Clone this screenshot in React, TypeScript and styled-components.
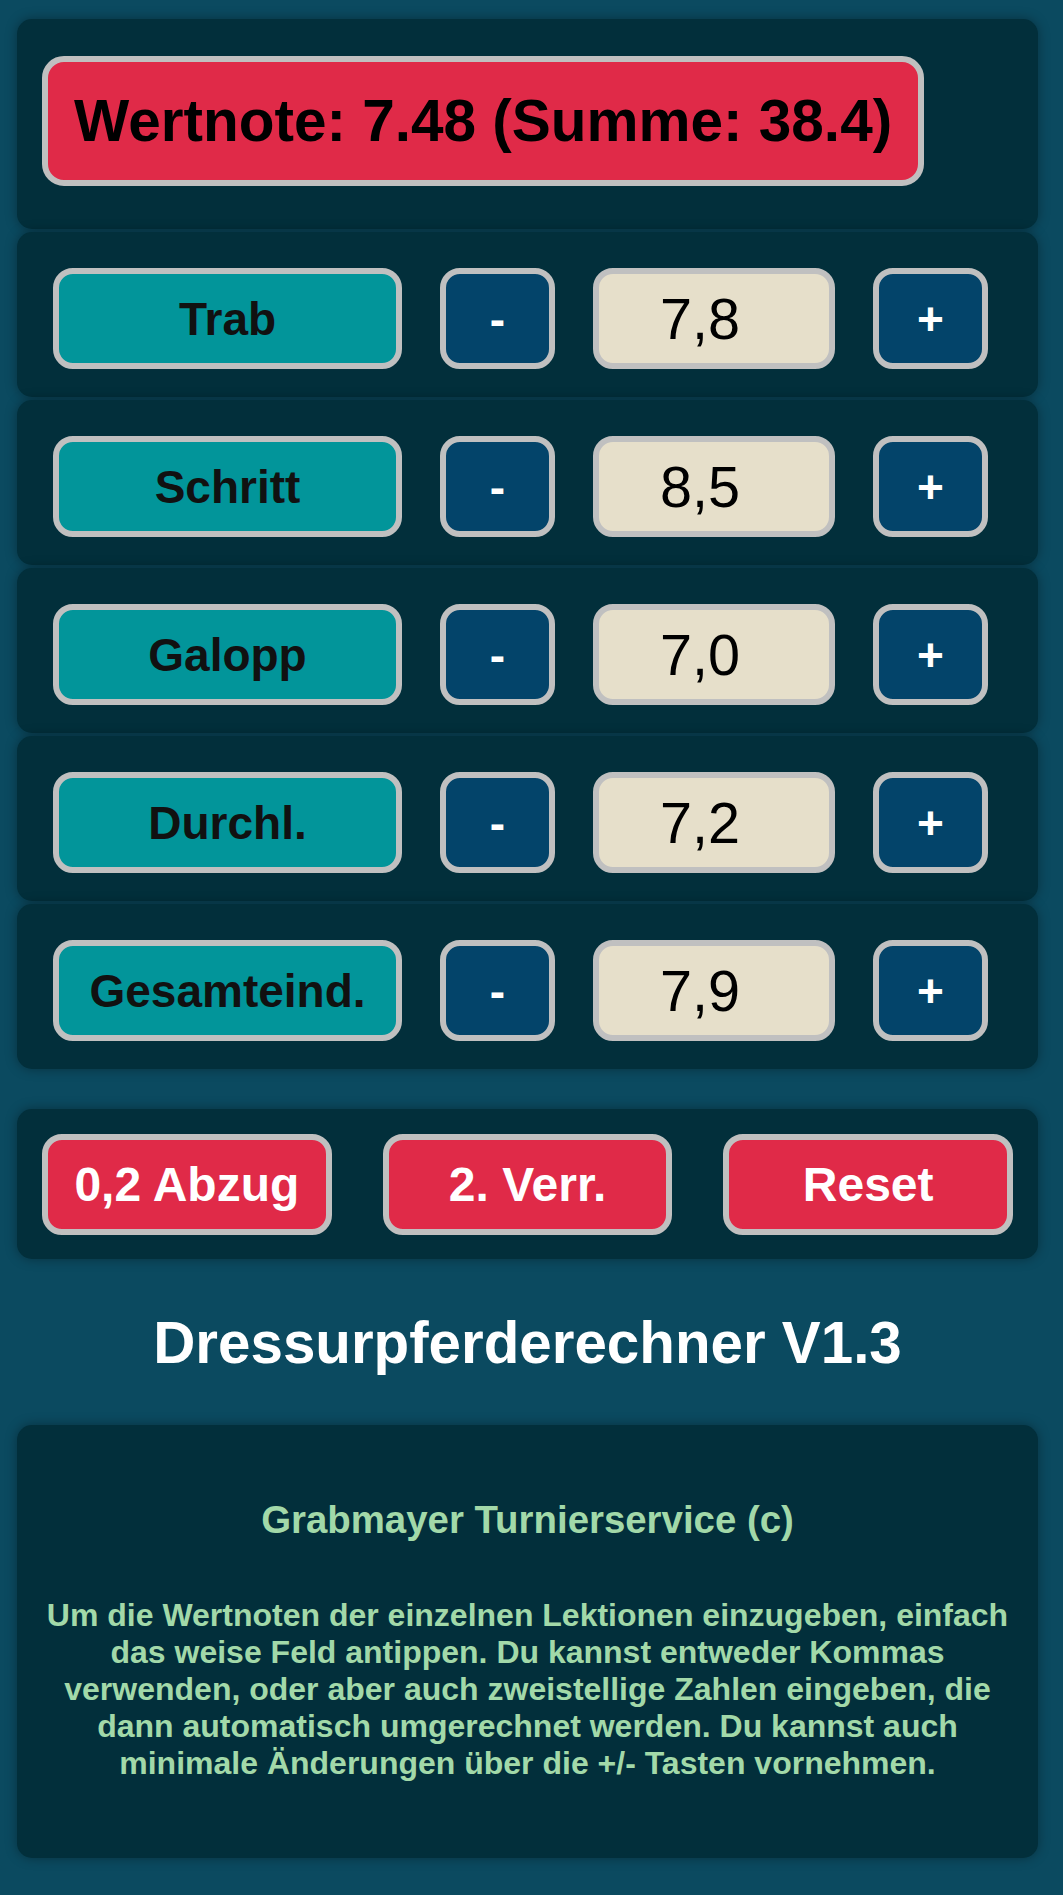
import React from "react";
import styled, { createGlobalStyle } from "styled-components";

const GlobalStyle = createGlobalStyle`
  html, body {
    margin: 0;
    padding: 0;
    background: #0b4a60;
    font-family: "Liberation Sans", Arial, sans-serif;
  }
  * {
    box-sizing: border-box;
  }
`;

const Page = styled.main`
  min-height: 1895px;
  padding: 19px 25px 37px 17px;
  background: #0b4a60;
`;

const Panel = styled.section`
  background: #022f3b;
  border-radius: 15px;
  box-shadow: 0 0 12px rgba(0, 0, 0, 0.35);
  margin-bottom: 3px;
`;

const ScorePanel = styled(Panel)`
  padding: 37px 25px 43px;
`;

const ScoreBox = styled.div`
  display: inline-block;
  padding: 26px;
  background: #e02a48;
  border: 6px solid #c0c0c0;
  border-radius: 22px;
  color: #000;
  font-size: 58.5px;
  font-weight: 700;
  line-height: 66px;
`;

const RowPanel = styled(Panel)`
  display: grid;
  grid-template-columns: 349px 115px 242px 115px;
  column-gap: 38px;
  padding: 36px 0 28px 36px;
`;

const Pill = styled.div`
  height: 101px;
  display: flex;
  align-items: center;
  justify-content: center;
  border: 6px solid #c0c0c0;
  border-radius: 20px;
  font-weight: 700;
`;

const Label = styled(Pill)`
  background: #02959a;
  color: #111;
  font-size: 46px;
`;

const StepButton = styled(Pill).attrs({ as: "button" })`
  background: #03446a;
  color: #fff;
  font-family: "Liberation Sans", Arial, sans-serif;
  font-size: 46px;
  padding: 0;
`;

const ValueField = styled.input`
  height: 101px;
  width: 242px;
  border: 6px solid #c0c0c0;
  border-radius: 20px;
  background: #e6dfca;
  color: #000;
  font-family: "Liberation Sans", Arial, sans-serif;
  font-size: 57.6px;
  text-align: center;
  padding: 0 28px 0 0;
  outline: none;
`;

const ActionPanel = styled(Panel)`
  display: flex;
  gap: 51px;
  padding: 25px 25px 24px;
  margin-top: 40px;
`;

const ActionButton = styled(Pill).attrs({ as: "button" })`
  flex: 1;
  background: #e02a48;
  color: #fff;
  font-family: "Liberation Sans", Arial, sans-serif;
  font-size: 48px;
  padding: 0;
`;

const Title = styled.h1`
  margin: 0;
  padding: 48px 0 49px;
  text-align: center;
  color: #fff;
  font-size: 58.3px;
  font-weight: 700;
  line-height: 66px;
`;

const InfoPanel = styled(Panel)`
  padding: 73px 20px 76px;
  text-align: center;
  color: #a2d9a9;
  font-weight: 700;
`;

const InfoHead = styled.h3`
  margin: 0 0 55px;
  font-size: 38.4px;
`;

const InfoText = styled.p`
  margin: 0;
  font-size: 32px;
`;

const rows = [
  { name: "Trab", value: "7,8" },
  { name: "Schritt", value: "8,5" },
  { name: "Galopp", value: "7,0" },
  { name: "Durchl.", value: "7,2" },
  { name: "Gesamteind.", value: "7,9" },
];

const App = () => {
  return (
    <>
      <GlobalStyle />
      <Page>
        <ScorePanel>
          <ScoreBox>Wertnote: 7.48 (Summe: 38.4)</ScoreBox>
        </ScorePanel>
        {rows.map((r) => (
          <RowPanel key={r.name}>
            <Label>{r.name}</Label>
            <StepButton>-</StepButton>
            <ValueField readOnly defaultValue={r.value} />
            <StepButton>+</StepButton>
          </RowPanel>
        ))}
        <ActionPanel>
          <ActionButton>0,2 Abzug</ActionButton>
          <ActionButton>2. Verr.</ActionButton>
          <ActionButton>Reset</ActionButton>
        </ActionPanel>
        <Title>Dressurpferderechner V1.3</Title>
        <InfoPanel>
          <InfoHead>Grabmayer Turnierservice (c)</InfoHead>
          <InfoText>
            Um die Wertnoten der einzelnen Lektionen einzugeben, einfach das weise Feld antippen. Du kannst
            entweder Kommas verwenden, oder aber auch zweistellige Zahlen eingeben, die dann automatisch
            umgerechnet werden. Du kannst auch minimale Änderungen über die +/- Tasten vornehmen.
          </InfoText>
        </InfoPanel>
      </Page>
    </>
  );
};

export default App;
